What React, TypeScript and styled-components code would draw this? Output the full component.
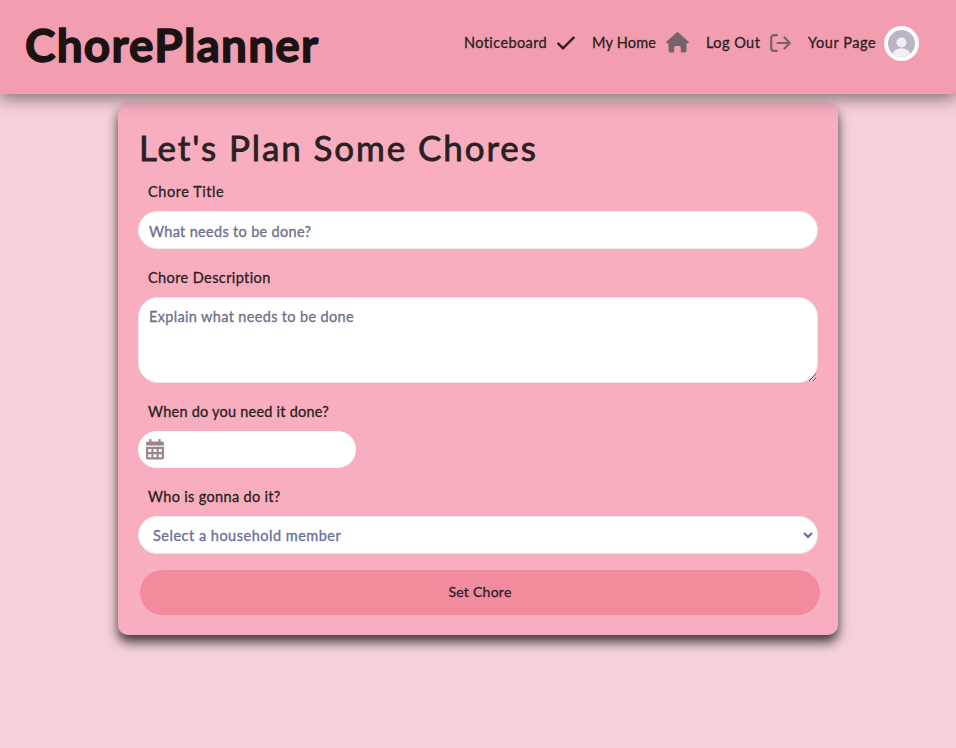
import React from 'react';
import styled, { createGlobalStyle } from 'styled-components';

const GlobalStyle = createGlobalStyle`
  *, *::before, *::after { box-sizing: border-box; }
  body {
    margin: 0;
    min-height: 748px;
    background: #f5d2d7;
    color: #2a1f22;
    font: 400 14.5px/24px Lato, 'Open Sans', sans-serif;
    overflow: hidden;
  }
  button, input, textarea { font: inherit; }
`;

const Header = styled.header`
  position: relative;
  z-index: 1;
  display: flex;
  justify-content: space-between;
  height: 94px;
  padding: 0 37px 0 25px;
  background: #f39db0;
  box-shadow: 0 5px 15px rgba(0, 0, 0, 0.45);
`;

const Logo = styled.a`
  margin-top: 17px;
  font-size: 46px;
  line-height: 56px;
  font-weight: 700;
  letter-spacing: 1.2px;
  color: #1b1214;
  -webkit-text-stroke: 1.4px #1b1214;
`;

const Nav = styled.nav`
  display: flex;
  gap: 17px;
  height: 85px;
  align-items: center;
`;

const NavLink = styled.a<{ $width: number; $spacing: number }>`
  display: flex;
  align-items: center;
  justify-content: space-between;
  width: ${p => p.$width}px;
  letter-spacing: ${p => p.$spacing}px;
  -webkit-text-stroke: 0.3px currentColor;
  white-space: nowrap;
`;

const Avatar = styled.svg`
  flex: none;
  width: 35px;
  height: 35px;
  margin-top: 2px;
`;

const Card = styled.main`
  width: 720px;
  height: 532px;
  margin: 9px auto 0;
  padding: 24px 20px 20px;
  border-radius: 10px;
  background: #f9aebf;
  box-shadow: 0 7px 12px rgba(0, 0, 0, 0.75);
`;

const Title = styled.h1`
  margin: 0 0 4px 1px;
  font-size: 35px;
  line-height: 40px;
  font-weight: 400;
  letter-spacing: 1.9px;
  -webkit-text-stroke: 0.8px currentColor;
`;

const Field = styled.div<{ $height: number }>`
  display: flex;
  flex-direction: column;
  height: ${p => p.$height}px;
`;

const Label = styled.label<{ $spacing: number }>`
  margin: 9px 0 7px 10px;
  letter-spacing: ${p => p.$spacing}px;
  -webkit-text-stroke: 0.3px currentColor;
`;

const Input = styled.input`
  height: 38px;
  padding: 7px 10px 4px;
  border: 1px solid #e9ecef;
  border-radius: 20px;
  background: #fff;
  outline: 0;
  letter-spacing: 0.32px;
  &::placeholder { color: #6d6f8c; -webkit-text-stroke: 0.3px #6d6f8c; }
`;

const TextArea = styled.textarea`
  height: 86px;
  padding: 7px 10px;
  border: 1px solid #e9ecef;
  border-radius: 20px;
  background: #fff;
  outline: 0;
  resize: vertical;
  letter-spacing: 0.34px;
  &::placeholder { color: #6d6f8c; -webkit-text-stroke: 0.3px #6d6f8c; }
`;

const DateBox = styled.div`
  display: flex;
  align-items: center;
  width: 218px;
  height: 37px;
  padding: 0 0 1px 8px;
  border-radius: 20px;
  background: #fff;
`;

const SelectBox = styled.button`
  display: flex;
  align-items: center;
  justify-content: space-between;
  height: 38px;
  padding: 1px 4px 0 14px;
  border: 1px solid #e9ecef;
  border-radius: 20px;
  background: #fff;
  color: #66709a;
  letter-spacing: 0.5px;
  -webkit-text-stroke: 0.3px currentColor;
`;

const Submit = styled.button`
  display: block;
  width: 680px;
  height: 45px;
  margin-left: 2px;
  padding: 0 0 1px;
  border: 0;
  border-radius: 23px;
  background: #f38b9e;
  color: #2a1f22;
  font-size: 14px;
  letter-spacing: 0.27px;
  -webkit-text-stroke: 0.3px currentColor;
`;

const CheckIcon = () => (
  <svg width="18" height="14" viewBox="0 0 18 14" fill="none" stroke="#2a1f22" strokeWidth="2.4" strokeLinecap="round">
    <path d="M1.300 7.600l4.700 4.700L16.600 1.700" />
  </svg>
);

const HouseIcon = () => (
  <svg width="23" height="21" viewBox="0 0 23 21" fill="#76626a">
    <path d="M10.600.5a1.400 1.400 0 0 1 1.800 0l9.900 9c.9.8.4 1.800-.6 1.800h-1.200v7.200a2 2 0 0 1-2 2h-2.400a1.300 1.300 0 0 1-1.300-1.300v-3.700a1.500 1.500 0 0 0-1.500-1.500h-3.600a1.500 1.500 0 0 0-1.500 1.500v3.700a1.300 1.300 0 0 1-1.300 1.300H4.500a2 2 0 0 1-2-2v-7.200H1.300c-1 0-1.500-1-.6-1.800z" />
  </svg>
);

const LogOutIcon = () => (
  <svg width="21" height="18" viewBox="0 0 21 18" fill="none" stroke="#76626a" strokeWidth="2.2" strokeLinecap="round" strokeLinejoin="round">
    <path d="M7 1.200H4a2.800 2.800 0 0 0-2.800 2.800v10A2.800 2.800 0 0 0 4 16.800h3M7.500 9h12M14.500 3.500L19.800 9l-5.300 5.500" />
  </svg>
);

const CalendarIcon = () => (
  <svg width="18" height="21" viewBox="0 0 18 21" fill="#9b858b">
    <path d="M3.300 1a1 1 0 0 1 2.200 0v1.500h7V1a1 1 0 0 1 2.200 0v1.500H16a2 2 0 0 1 2 2V6.500H0v-2a2 2 0 0 1 2-2h1.300z" />
    <path fillRule="evenodd" d="M0 7.800h18V18.500a2 2 0 0 1-2 2H2a2 2 0 0 1-2-2zM2.200 10v3h3.200v-3zM7.400 10v3h3.200v-3zM12.600 10v3h3.200v-3zM2.200 15.200v3h3.200v-3zM7.400 15.200v3h3.200v-3zM12.600 15.200v3h3.200v-3z" />
  </svg>
);

export default function App() {
  return (
    <>
      <GlobalStyle />
      <Header>
        <Logo>ChorePlanner</Logo>
        <Nav>
          <NavLink $width={111} $spacing={0.4}>Noticeboard<CheckIcon /></NavLink>
          <NavLink $width={97} $spacing={0.2}>My Home<HouseIcon /></NavLink>
          <NavLink $width={85} $spacing={0.45}>Log Out<LogOutIcon /></NavLink>
          <NavLink $width={111} $spacing={0.55}>
            Your Page
            <Avatar viewBox="0 0 35 35">
              <circle cx="17.5" cy="17.5" r="17.5" fill="#fff" />
              <clipPath id="face"><circle cx="17.5" cy="17.5" r="13.5" /></clipPath>
              <g clipPath="url(#face)">
                <rect width="35" height="35" fill="#bbb4c2" />
                <circle cx="17.5" cy="16.5" r="5" fill="#f1eff5" />
                <ellipse cx="17.5" cy="30" rx="9.5" ry="7.8" fill="#f1eff5" />
              </g>
            </Avatar>
          </NavLink>
        </Nav>
      </Header>
      <Card>
        <Title>Let's Plan Some Chores</Title>
        <Field $height={86}>
          <Label $spacing={0.55}>Chore Title</Label>
          <Input placeholder="What needs to be done?" />
        </Field>
        <Field $height={134}>
          <Label $spacing={0.4}>Chore Description</Label>
          <TextArea placeholder="Explain what needs to be done" />
        </Field>
        <Field $height={85}>
          <Label $spacing={0.23}>When do you need it done?</Label>
          <DateBox><CalendarIcon /></DateBox>
        </Field>
        <Field $height={94}>
          <Label $spacing={0.33}>Who is gonna do it?</Label>
          <SelectBox type="button">
            Select a household member
            <svg width="10" height="7" viewBox="0 0 10 7" fill="none" stroke="#5d6ba3" strokeWidth="2">
              <path d="M1 1l4 4 4-4" />
            </svg>
          </SelectBox>
        </Field>
        <Submit type="button">Set Chore</Submit>
      </Card>
    </>
  );
}
